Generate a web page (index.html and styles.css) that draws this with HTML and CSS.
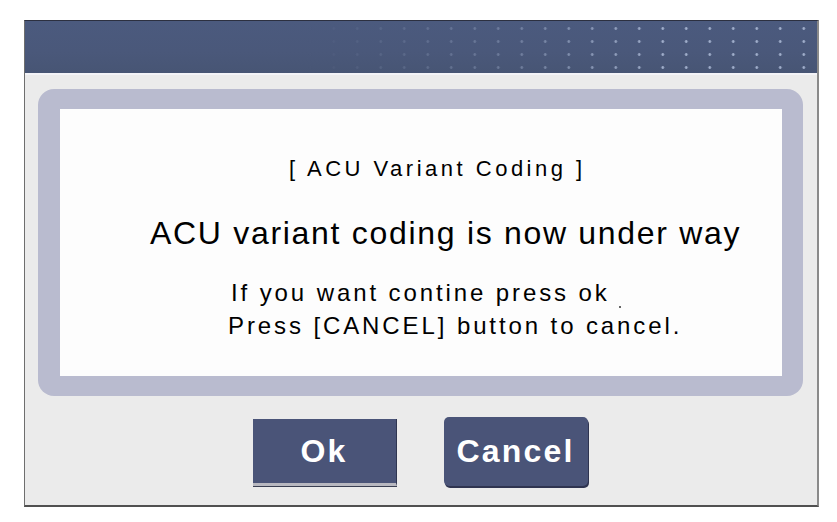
FILE: index.html
```html
<!DOCTYPE html>
<html>
<head>
<meta charset="utf-8">
<link rel="stylesheet" href="styles.css">
</head>
<body>
<div class="frame">
  <div class="header"><div class="dots"></div></div>
  <div class="panel">
    <div class="sheet">
      <p class="title">[ ACU Variant Coding ]</p>
      <p class="main">ACU variant coding is now under way</p>
      <div class="note">
        <p class="note-first">If you want contine press ok</p>
        <p>Press [CANCEL] button to cancel.</p>
      </div>
      <span class="speck"></span>
    </div>
  </div>
  <div class="actions">
    <button class="btn btn-ok">Ok</button>
    <button class="btn btn-cancel">Cancel</button>
  </div>
</div>
</body>
</html>
```
FILE: styles.css
```css
* { box-sizing: border-box; }
html, body { margin: 0; padding: 0; background: #ffffff; }
body { font-family: "Liberation Sans", Arial, sans-serif; color: #000; }

.frame {
  margin: 20px 0 0 24px;
  width: 795px;
  height: 487px;
  border-top: 1px solid #2c3040;
  border-left: 1px solid #6e6e6e;
  border-right: 2px solid #8a8a8a;
  border-bottom: 2px solid #505050;
  background: #ebebeb;
  display: flex;
  flex-direction: column;
}

.header {
  height: 54px;
  background: linear-gradient(180deg, #4b5a7e 0%, #4a587a 60%, #475574 100%);
  border-bottom: 2px solid #f3f3f7;
  position: relative;
  flex: none;
}
.dots {
  position: absolute;
  inset: 0;
  background-image: radial-gradient(circle, rgba(170,184,212,0.9) 1px, rgba(170,184,212,0) 1.8px);
  background-size: 23.5px 13px;
  background-position: 532px 1px;
  -webkit-mask-image: linear-gradient(90deg, transparent 0px, transparent 280px, rgba(0,0,0,0.45) 500px, #000 640px);
  mask-image: linear-gradient(90deg, transparent 0px, transparent 280px, rgba(0,0,0,0.45) 500px, #000 640px);
}

.panel {
  margin: 14px 14px 0 13px;
  height: 307px;
  background: #b9bbcf;
  border-radius: 16px;
  padding: 20px 21px 20px 22px;
  flex: none;
}
.sheet {
  position: relative;
  height: 267px;
  background: #fdfdfd;
  overflow: hidden;
}
.sheet p { margin: 0; }

.title {
  padding-top: 49px;
  margin-left: 229px !important;
  font-size: 22px;
  line-height: 22px;
  letter-spacing: 3.5px;
}
.main {
  margin-top: 37px !important;
  margin-left: 90px !important;
  font-size: 32px;
  line-height: 32px;
  letter-spacing: 1.7px;
}
.note {
  margin-top: 27px;
  margin-left: 168px;
  font-size: 24px;
  line-height: 33px;
  letter-spacing: 2.9px;
}
.note-first { text-indent: 3px; }

.speck {
  position: absolute;
  left: 559px;
  top: 197px;
  width: 2px;
  height: 2px;
  background: #333;
  border-radius: 1px;
}

.actions {
  flex: 1;
  display: flex;
  justify-content: center;
  align-items: flex-start;
  gap: 47px;
  padding-top: 21px;
  padding-right: 2px;
}
.btn {
  width: 144px;
  background: #4a5478;
  color: #ffffff;
  border: none;
  font-family: "Liberation Sans", Arial, sans-serif;
  font-weight: bold;
  font-size: 32px;
  letter-spacing: 2.2px;
  padding: 0;
}
.btn-ok {
  margin-top: 2px;
  height: 67px;
  border-bottom: 3px solid #b8b8c0;
  border-right: 1px solid #2f3550;
  box-shadow: 0 1px 0 #3a3f52;
}
.btn-cancel {
  height: 69px;
  border-radius: 5px;
  box-shadow: 1px 2px 0 #2f3450;
}
```
